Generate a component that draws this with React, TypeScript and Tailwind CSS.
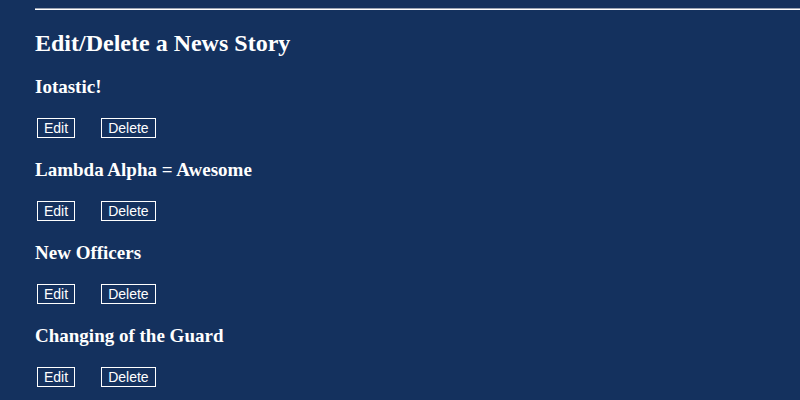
const stories = ["Iotastic!", "Lambda Alpha = Awesome", "New Officers", "Changing of the Guard"]

export default function App() {
  return (
    <div className="min-h-[400px] w-[800px] overflow-hidden bg-[#14315e] pl-[35px] pt-2 text-white [font-family:'Liberation_Serif',serif]">
      <div className="h-[2px] border-t border-t-[#9aa3b3] border-b border-b-white" />
      <h2 className="mt-[19px] text-[24px] font-bold leading-[28px]">Edit/Delete a News Story</h2>
      <div className="mt-[19px] flex flex-col gap-[21px]">
        {stories.map((title) => (
          <div key={title}>
            <h3 className="text-[19px] font-bold leading-[22px]">{title}</h3>
            <div className="mt-[20px] flex gap-[26px] pl-[2px] [font-family:'Liberation_Sans',sans-serif] text-[14px]">
              <button className="border border-white px-[6px] leading-[18px]">Edit</button>
              <button className="border border-white px-[6px] leading-[18px]">Delete</button>
            </div>
          </div>
        ))}
      </div>
    </div>
  )
}
